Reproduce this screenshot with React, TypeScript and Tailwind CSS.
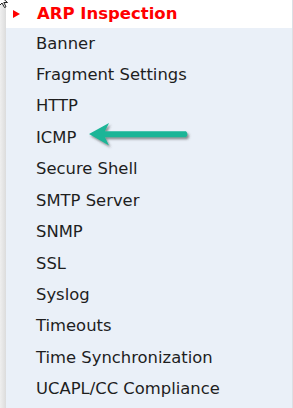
import React from 'react';

const items = [
  'Banner',
  'Fragment Settings',
  'HTTP',
  'ICMP',
  'Secure Shell',
  'SMTP Server',
  'SNMP',
  'SSL',
  'Syslog',
  'Timeouts',
  'Time Synchronization',
  'UCAPL/CC Compliance',
];

// callout arrow pointing at ICMP
const TealArrow = () => (
  <svg width="112" height="36" viewBox="0 0 112 36" className="absolute left-[86px] top-[118px]">
    <defs>
      <filter id="sh" x="-10%" y="-30%" width="130%" height="170%">
        <feDropShadow dx="1.5" dy="2" stdDeviation="1" floodColor="#444" floodOpacity="0.6" />
      </filter>
    </defs>
    <g filter="url(#sh)">
      <path
        d="M3 16 L23 5 L19 13.2 L100 13.2 Q103 16.2 100 19.2 L19 19.2 L23 27.5 Z"
        fill="#1bb597"
        strokeLinejoin="round"
      />
    </g>
  </svg>
);

export default function App() {
  return (
    <div
      className="w-[293px] h-[408px] overflow-hidden relative bg-[#eaf0f8] flex"
      style={{ fontFamily: '"DejaVu Sans", Verdana, sans-serif' }}
    >
      <div className="w-[6px] shrink-0 bg-gradient-to-r from-[#efefef] to-[#dcdcdc]" />
      <div className="flex-1 flex flex-col border-r border-[#dcdfe4]">
        <div className="h-[28px] bg-white flex items-center shrink-0">
          <span className="ml-[7px] w-0 h-0 border-y-[4.5px] border-y-transparent border-l-[7px] border-l-[#ff0000]" />
          <span className="ml-[17px] text-[16.5px] font-bold text-[#ff0000] leading-none">ARP Inspection</span>
        </div>
        {items.map((it) => (
          <div key={it} className="h-[31.45px] flex items-center shrink-0">
            <span className="ml-[30px] text-[16.4px] text-[#1e1e1e] leading-none">{it}</span>
          </div>
        ))}
      </div>
      <TealArrow />
      <svg width="14" height="14" viewBox="0 0 14 14" className="absolute left-[-3px] top-[-6px]">
        <path d="M2 1 L2 12 L5 9 L7.5 13.5 L9 12.8 L6.8 8.5 L10.5 8.5 Z" fill="#fff" stroke="#222" strokeWidth="1" />
      </svg>
    </div>
  );
}
